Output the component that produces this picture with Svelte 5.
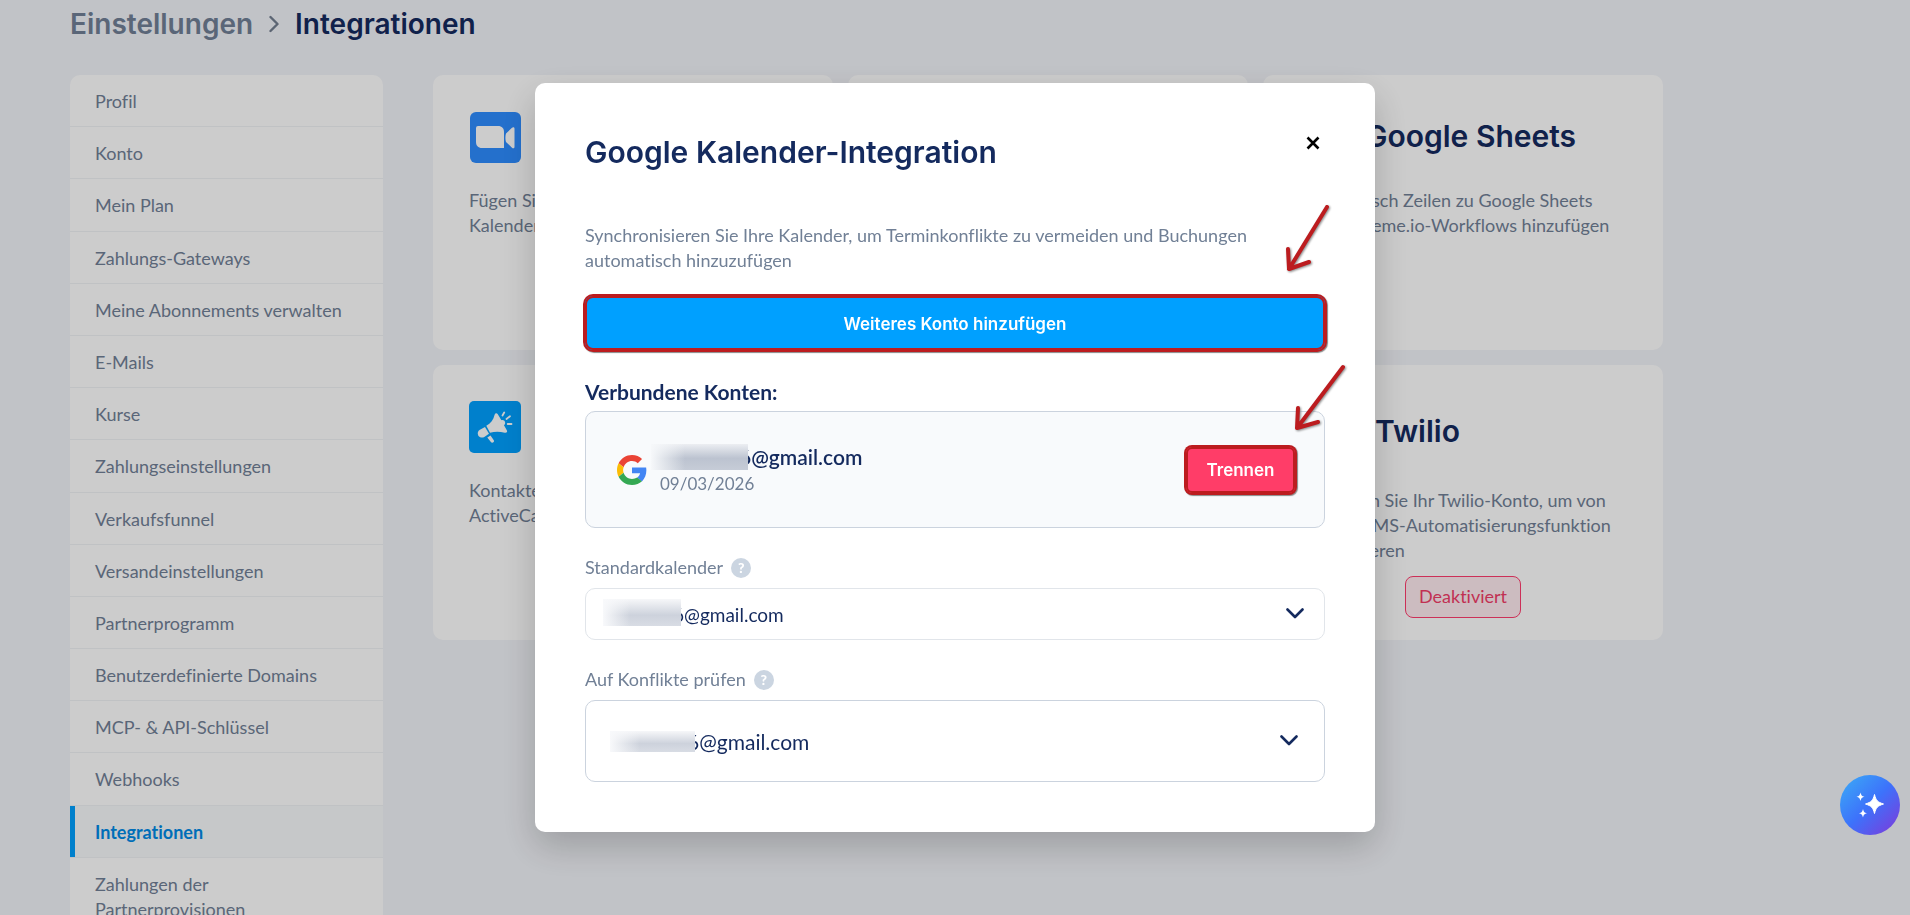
<script>
  const items = [
    'Profil', 'Konto', 'Mein Plan', 'Zahlungs-Gateways', 'Meine Abonnements verwalten', 'E-Mails',
    'Kurse', 'Zahlungseinstellungen', 'Verkaufsfunnel', 'Versandeinstellungen', 'Partnerprogramm',
    'Benutzerdefinierte Domains', 'MCP- & API-Schlüssel', 'Webhooks', 'Integrationen',
    'Zahlungen der Partnerprovisionen'
  ];
  const active = 'Integrationen';
</script>

<div class="page">
  <header class="crumbs">
    <a href="#settings">Einstellungen</a>
    <svg width="10" height="18" viewBox="0 0 10 18" fill="none" stroke="#737f90" stroke-width="2.4" stroke-linecap="round" stroke-linejoin="round" aria-hidden="true"><path d="M1.5 2 8.5 9l-7 7" /></svg>
    <h1>Integrationen</h1>
  </header>

  <div class="columns">
    <nav class="side">
      <ul>
        {#each items as item}
          <li><a href="#nav" class:active={item === active}><span>{item}</span></a></li>
        {/each}
      </ul>
    </nav>

    <main class="grid">
      <article class="card">
        <div class="head">
          <svg class="icon" viewBox="0 0 52 52" aria-hidden="true">
            <rect x="1" y="1" width="51" height="51" rx="6" fill="#2d8cff" />
            <path d="M7 17a2 2 0 0 1 2-2h20c4 0 6 2.500 6 6v16H13c-4 0-6-2.500-6-6zM37 22.500l6-5.800c1-.9 2.500-.7 2.500 1v18c0 1.700-1.500 1.900-2.500 1l-6-5.800c-.8-2.600-.8-5.800 0-8.400z" fill="#fff" />
          </svg>
          <h2>Zoom</h2>
        </div>
        <p>Fügen Sie Zoom-Meetings zu Ihren Kalenderbuchungen hinzu</p>
      </article>
      <article class="card"></article>
      <article class="card">
        <div class="head">
          <svg class="icon" viewBox="0 0 52 52" aria-hidden="true"><rect x="8" width="36" height="52" rx="4" fill="#0f9d58" /><path d="M15 24h22v18H15zM15 33h22M26 24v18" fill="none" stroke="#fff" stroke-width="3" /></svg>
          <h2>Google Sheets</h2>
        </div>
        <p>Automatisch Zeilen zu Google Sheets über Systeme.io-Workflows hinzufügen</p>
      </article>
      <article class="card">
        <div class="head">
          <svg class="icon" viewBox="0 0 52 52" aria-hidden="true">
            <rect width="52" height="52" rx="5" fill="#00a0ff" />
            <g fill="#fff">
              <path d="M17.300 24.800c4.500-2.400 7.200-6 8.300-11 .5-2 2.200-2.200 3.200-.6l3.600 6c2-.6 3.800.8 3.800 2.700 0 1-.4 1.800-1.200 2.400l2.800 5c.9 1.600-.1 2.900-2 2.500-5.500-1.300-10-1.200-14.800 0z" />
              <path d="M16 26l4 6.800-4.700 3.200c-2.300 1.200-4.800.6-6-1.500-1.200-2.100-.4-4.500 1.600-5.700z" />
              <path d="m18.300 36.500 3.200-2 3.300 4.700c.6 1-.1 2-1 2.400-.8.400-1.400.1-1.900-.5z" />
            </g>
            <path d="m33.500 14.500 1.700-3M37.500 18l3.500-2.800M38.700 23h3.800" stroke="#fff" stroke-width="1.800" stroke-linecap="round" />
          </svg>
          <h2>ActiveCampaign</h2>
        </div>
        <p>Kontakte automatisch mit ActiveCampaign synchronisieren</p>
      </article>
      <article class="card"></article>
      <article class="card">
        <div class="head">
          <svg class="icon large" viewBox="0 0 62 62" aria-hidden="true"><circle cx="31" cy="31" r="27" fill="none" stroke="#f22f46" stroke-width="7" /><g fill="#f22f46"><circle cx="23" cy="23" r="5" /><circle cx="39" cy="23" r="5" /><circle cx="23" cy="39" r="5" /><circle cx="39" cy="39" r="5" /></g></svg>
          <h2>Twilio</h2>
        </div>
        <p>Verbinden Sie Ihr Twilio-Konto, um von unserer SMS-Automatisierungsfunktion zu profitieren</p>
        <button class="status" type="button">Deaktiviert</button>
      </article>
    </main>
  </div>
</div>

<div class="overlay">
  <section class="modal" role="dialog" aria-modal="true" aria-labelledby="dialog-title">
    <div class="modal-head">
      <h2 id="dialog-title">Google Kalender-Integration</h2>
      <button class="close" type="button" aria-label="Schließen">
        <svg width="14" height="14" viewBox="0 0 14 14" stroke="#000" stroke-width="2.600" aria-hidden="true"><path d="m1.500 1.500 11 11m0-11-11 11" /></svg>
      </button>
    </div>
    <p class="intro">Synchronisieren Sie Ihre Kalender, um Terminkonflikte zu vermeiden und Buchungen automatisch hinzuzufügen</p>
    <button class="primary marked" type="button">Weiteres Konto hinzufügen</button>

    <h3>Verbundene Konten:</h3>
    <div class="account">
      <svg class="google" viewBox="0 0 48 48" aria-hidden="true">
        <path fill="#ea4335" d="M24 9.500c3.540 0 6.710 1.220 9.210 3.600l6.850-6.850C35.900 2.380 30.470 0 24 0 14.620 0 6.510 5.380 2.560 13.220l7.980 6.190C12.430 13.720 17.740 9.500 24 9.500z" />
        <path fill="#4285f4" d="M46.980 24.550c0-1.570-.15-3.090-.38-4.550H24v9.020h12.940c-.58 2.960-2.260 5.480-4.780 7.180l7.730 6c4.510-4.180 7.090-10.360 7.090-17.650z" />
        <path fill="#fbbc05" d="M10.530 28.590c-.48-1.450-.76-2.990-.76-4.590s.27-3.140.76-4.590l-7.980-6.190C.92 16.460 0 20.120 0 24c0 3.880.92 7.540 2.560 10.780l7.970-6.190z" />
        <path fill="#34a853" d="M24 48c6.480 0 11.930-2.130 15.890-5.810l-7.730-6c-2.150 1.450-4.920 2.300-8.160 2.300-6.260 0-11.570-4.220-13.470-9.910l-7.980 6.190C6.510 42.620 14.620 48 24 48z" />
      </svg>
      <div class="who">
        <div class="mail"><span class="mask"></span><strong>6@gmail.com</strong></div>
        <time>09/03/2026</time>
      </div>
      <button class="danger marked" type="button">Trennen</button>
    </div>

    <div class="label">
      <label for="default-calendar">Standardkalender</label>
      <button class="help" type="button" aria-label="Hilfe">?</button>
    </div>
    <div class="field">
      <select id="default-calendar"><option>6@gmail.com</option></select>
      <span class="mask"></span>
      <svg width="18" height="11" viewBox="0 0 18 11" aria-hidden="true"><path d="m1.500 1.500 7.500 7.500 7.500-7.500" /></svg>
    </div>

    <div class="label">
      <label for="conflicts">Auf Konflikte prüfen</label>
      <button class="help" type="button" aria-label="Hilfe">?</button>
    </div>
    <div class="field tall">
      <select id="conflicts"><option>6@gmail.com</option></select>
      <span class="mask"></span>
      <svg width="18" height="11" viewBox="0 0 18 11" aria-hidden="true"><path d="m1.500 1.500 7.500 7.500 7.500-7.500" /></svg>
    </div>

    <svg class="arrows" width="840" height="749" viewBox="0 0 840 749" aria-hidden="true">
      <path d="M792 124 754 186M753 166l1 20 20-7" />
      <path d="m808 284-46 61M763 325l-1 20 21-6" />
    </svg>
  </section>
</div>

<button class="assistant" type="button" aria-label="Assistent">
  <svg width="60" height="60" viewBox="0 0 60 60" fill="#fff" aria-hidden="true">
    <path d="M34.500 19.500c1.500 6 3 7.500 9 9.500-6 2-7.500 3.500-9 9.500-1.500-6-3-7.500-9-9.500 6-2 7.500-3.500 9-9.500z" stroke="#fff" stroke-linejoin="round" />
    <path d="M20.500 17.500c.8 3 1.300 3.500 4 4.300-2.700.8-3.200 1.300-4 4.300-.8-3-1.300-3.500-4-4.300 2.700-.8 3.200-1.300 4-4.300zM23 34c.8 3 1.300 3.500 4 4.300-2.700.8-3.200 1.300-4 4.300-.8-3-1.300-3.500-4-4.300 2.700-.8 3.200-1.300 4-4.300z" />
  </svg>
</button>

<style>
  :global(body) {
    background: #f2f4f9;
    overflow: hidden;
  }
  :global(#app) {
    font-family: Lato, sans-serif;
    font-size: 18px;
    font-variant-ligatures: none;
    line-height: 25px;
    color: #718096;
  }
  * { box-sizing: border-box; }
  h1, h2, h3, p, ul { margin: 0; padding: 0; }
  a { color: inherit; text-decoration: none; }
  button, select { font: inherit; cursor: pointer; }
  svg { flex: none; }

  .page {
    height: 100vh;
    overflow: hidden;
    padding: 4px 70px 0;
  }
  .crumbs {
    display: flex;
    align-items: center;
    gap: 16px;
    height: 40px;
    font: 600 28px/40px Inter, sans-serif;
  }
  h1 { font: inherit; color: #142a5e; }
  .columns {
    display: grid;
    grid-template-columns: 313px minmax(0, 1fr);
    gap: 50px;
    max-width: 1593px;
    margin-top: 31px;
    align-items: start;
  }
  .side, .card { background: #fff; border-radius: 10px; }
  .side { overflow: hidden; }
  ul { list-style: none; }
  li { border-bottom: 1px solid #f1f3f6; }
  li a {
    display: block;
    padding: 14px 25px 12px;
    line-height: 1.4;
  }
  li span { display: block; max-width: 260px; }
  li a.active {
    background: linear-gradient(#00a0ff, #00a0ff) 0 0 / 5px 100% no-repeat #f8fafc;
    color: #008ae6;
    font-weight: 700;
  }
  .grid {
    display: grid;
    grid-template-columns: repeat(3, minmax(0, 1fr));
    grid-auto-rows: 275px;
    gap: 15px;
  }
  .card {
    display: flex;
    flex-direction: column;
    padding: 36px 36px 22px;
  }
  .head {
    display: flex;
    align-items: center;
    gap: 14px;
    margin-bottom: 25px;
  }
  .icon { width: 52px; height: 52px; }
  .icon.large { width: 62px; height: 62px; }
  h2 {
    font: 600 30px/38px Inter, sans-serif;
    color: #142a5e;
    white-space: nowrap;
  }
  .card h2 { padding-bottom: 2px; }
  .status {
    align-self: center;
    margin-top: auto;
    height: 42px;
    padding: 0 13px 2px;
    border: 1px solid #ff3d6e;
    border-radius: 8px;
    background: #ffecf0;
    color: #f23d68;
  }

  .overlay {
    position: fixed;
    inset: 0;
    display: flex;
    align-items: center;
    justify-content: center;
    background: rgba(0, 0, 0, 0.2);
  }
  .modal {
    position: relative;
    width: 840px;
    max-width: 100%;
    padding: 50px;
    border-radius: 10px;
    background: #fff;
    box-shadow: 0 14px 36px rgba(0, 0, 0, 0.2);
  }
  .modal-head {
    display: flex;
    justify-content: space-between;
    align-items: flex-start;
  }
  .close {
    display: flex;
    padding: 3px 5px;
    border: 0;
    background: none;
  }
  .intro { margin: 52px 0 23px; }
  .primary, .danger {
    padding: 2px 0 0;
    border: 0;
    color: #fff;
    font: 600 17px/25px Inter, sans-serif;
  }
  .primary {
    display: block;
    width: 100%;
    height: 54px;
    border-radius: 8px;
    background: #00a0ff;
  }
  .marked { box-shadow: inset 0 0 0 2px #bc1c1f, 0 0 0 2px #bc1c1f, 1px 1px 1px 2px #888; }
  h3 {
    margin: 29px 0 7px;
    font-size: 21px;
    line-height: 25px;
    color: #142a5e;
  }
  .account {
    display: flex;
    align-items: center;
    height: 117px;
    padding: 0 29px 0 31px;
    border: 1px solid #cbd3de;
    border-radius: 10px;
    background: #f8fafc;
  }
  .google { width: 30px; height: 30px; }
  .who { flex: 1; padding-left: 4px; }
  .mail {
    display: flex;
    align-items: center;
    font-size: 21px;
    line-height: 28px;
    color: #142a5e;
  }
  .mail strong { font-weight: 600; }
  time { display: block; padding-left: 9px; font-size: 17px; }
  .mask {
    width: 97px;
    height: 26px;
    background:
      linear-gradient(90deg, #f6f8fa, rgba(246, 248, 250, 0) 35%),
      linear-gradient(#eceef2, #bcc3d0 55%, #c6ccd7);
  }
  .mail .mask { position: relative; margin-right: -9px; }
  .danger {
    width: 109px;
    height: 46px;
    border-radius: 6px;
    background: #ff3d68;
  }
  .label {
    display: flex;
    align-items: center;
    gap: 8px;
    margin: 27px 0 8px;
  }
  .help {
    width: 20px;
    height: 20px;
    padding: 0;
    border: 0;
    border-radius: 50%;
    background: #cbd5e1;
    color: #fff;
    font-size: 14px;
    font-weight: 900;
    line-height: 20px;
  }
  .field { position: relative; }
  .field select {
    display: block;
    appearance: none;
    width: 100%;
    height: 52px;
    padding: 0 50px 0 87px;
    border: 1px solid #e1e5ea;
    border-radius: 10px;
    background: #fff;
    color: #142a5e;
    font-size: 19px;
  }
  .field .mask {
    position: absolute;
    left: 18px;
    top: 11px;
    width: 78px;
    height: 27px;
    background:
      linear-gradient(90deg, #f8f9fb, rgba(248, 249, 251, 0) 35%),
      linear-gradient(#f6f7f9, #cdd2dc 60%, #d8dce4);
  }
  .field svg {
    position: absolute;
    right: 21px;
    top: 20px;
    fill: none;
    stroke: #142a5e;
    stroke-width: 2.600;
    stroke-linecap: round;
    stroke-linejoin: round;
  }
  .field.tall select {
    height: 82px;
    padding-left: 101px;
    border-color: #cbd3de;
    font-size: 21px;
  }
  .field.tall .mask { left: 25px; top: 31px; width: 85px; height: 21px; }
  .field.tall svg { right: 27px; top: 35px; }
  .arrows {
    position: absolute;
    left: 0;
    top: 0;
    fill: none;
    stroke: #bc1c1f;
    stroke-width: 4;
    stroke-linecap: round;
    stroke-linejoin: round;
    filter: drop-shadow(1px 1px 1px #888);
    pointer-events: none;
  }
  .assistant {
    position: fixed;
    right: 10px;
    bottom: 80px;
    width: 60px;
    height: 60px;
    padding: 0;
    border: 0;
    border-radius: 50%;
    background: linear-gradient(135deg, #3ba4f6 8%, #3d72fb 50%, #7a3ddc 95%);
  }
</style>
